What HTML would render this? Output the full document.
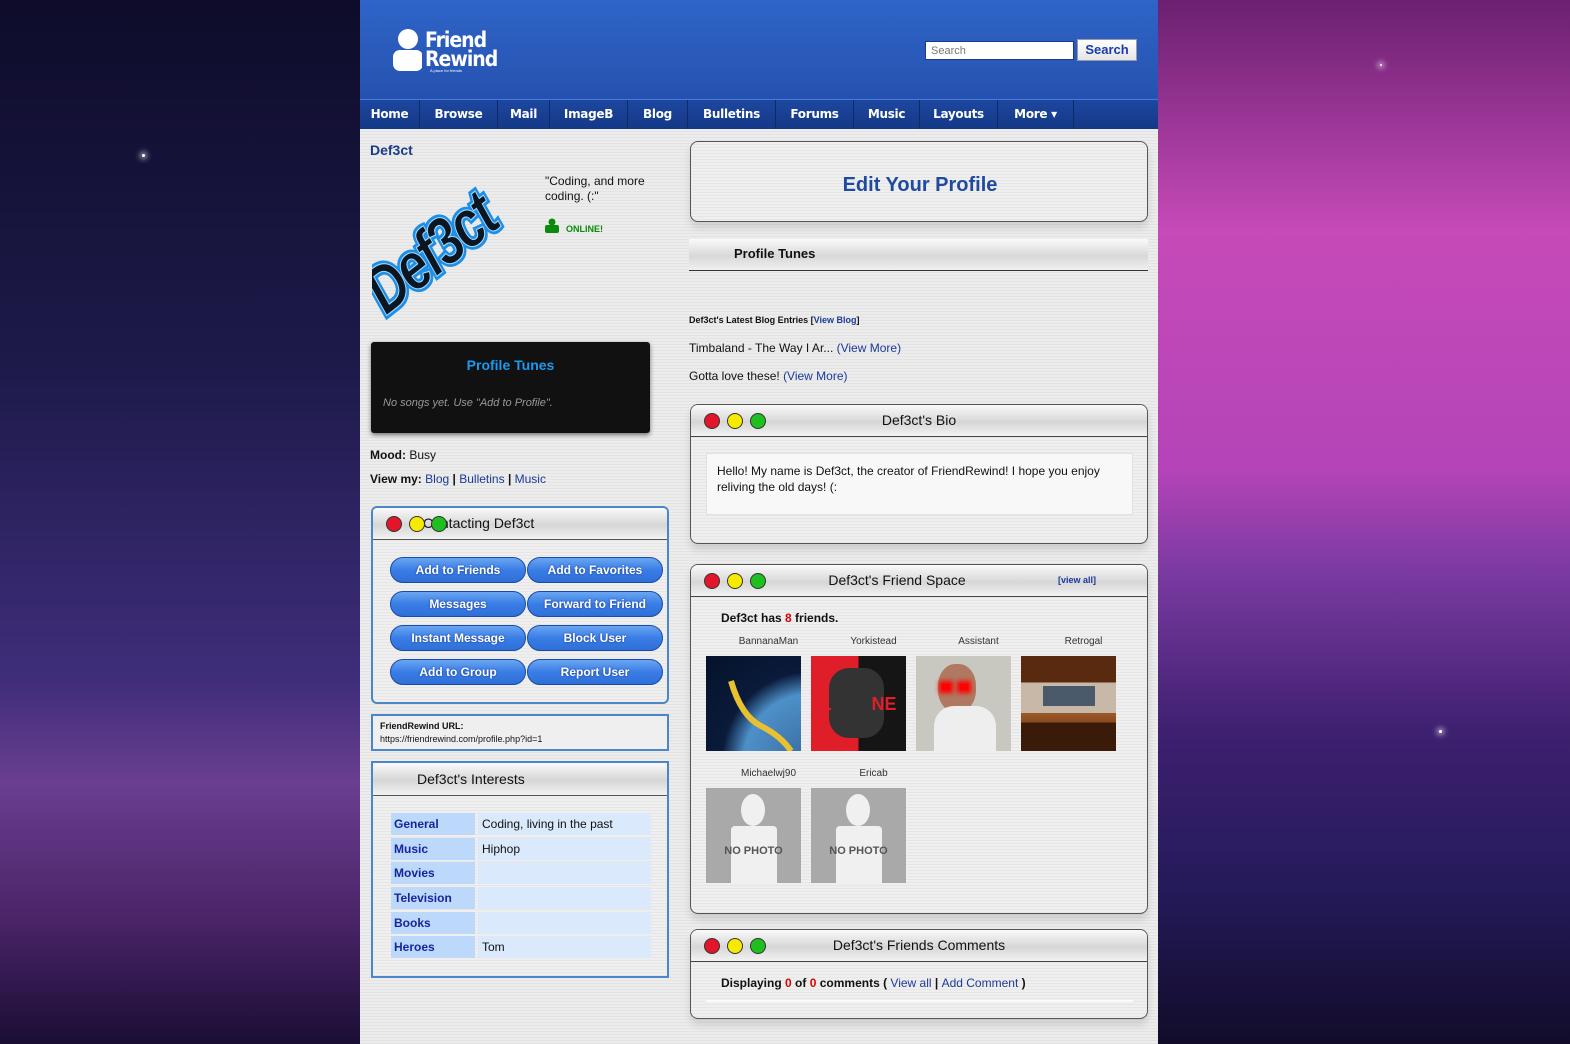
<!DOCTYPE html>
<html><head><meta charset="utf-8">
<style>
*{margin:0;padding:0;box-sizing:border-box}
body{width:1570px;height:1044px;overflow:hidden;font-family:"Liberation Sans",Arial,sans-serif;font-size:12px;color:#111;position:relative;background:#2a1a50}
.bgl{position:absolute;left:0;top:0;width:360px;height:1044px;background:linear-gradient(#0e0c2a 0%,#1d1a4a 35%,#3f2d7a 65%,#6a3e90 75%,#4a2468 88%,#1a0e34 100%)}
.bgr{position:absolute;left:1158px;top:0;width:412px;height:1044px;background:linear-gradient(#6a2070 0%,#c64ab8 22%,#b444b8 45%,#7a3aa0 55%,#3e2070 70%,#251a5a 85%,#120c2a 100%)}
.star{position:absolute;width:3px;height:3px;background:#fff;border-radius:50%;box-shadow:0 0 6px 2px rgba(255,255,255,.7)}
.page{position:absolute;left:360px;top:0;width:798px;height:1044px;background:repeating-linear-gradient(#ececec 0,#ececec 2px,#e3e3e3 2px,#e3e3e3 3px)}
.hdr{position:absolute;left:0;top:0;width:798px;height:99px;background:linear-gradient(#2f64c8,#2552b0)}
.nav{position:absolute;left:0;top:99px;width:798px;height:30px;background:linear-gradient(#1d47a0,#143886);border-top:1px solid #4a7ad8}
.nav span{position:absolute;top:0;height:29px;line-height:29px;color:#fff;font-weight:bold;font-size:12px;border-right:1px solid #0e2a6a;text-align:center;font-family:"DejaVu Sans","Liberation Sans",sans-serif;letter-spacing:-0.3px}
.a{position:absolute}
a,.lk{color:#1a3a9a;text-decoration:none}
.win{position:absolute;border:1px solid #555;border-radius:8px;overflow:hidden;box-shadow:0 6px 8px rgba(0,0,0,.12);background:repeating-linear-gradient(#efefef 0,#efefef 2px,#e6e6e6 2px,#e6e6e6 3px)}
.wh{position:absolute;left:0;top:0;right:0;height:32px;background:linear-gradient(#fafafa,#d6d6d6 55%,#f2f2f2);border-bottom:1px solid #444;font-size:14px;text-align:center;line-height:30px;color:#111}
.dot{position:absolute;top:8px;width:16px;height:16px;border-radius:50%;border:1px solid #333}
.r{background:#e3152a}.y{background:#f5ea00}.g{background:#1fbf1f}
.bwin{position:absolute;border:2px solid #4a86c8;border-radius:6px;background:repeating-linear-gradient(#efefef 0,#efefef 2px,#e6e6e6 2px,#e6e6e6 3px);overflow:hidden}
.btn{position:absolute;width:136px;height:26px;border-radius:13px;background:linear-gradient(#6aa6f2,#3a7de6 50%,#2f6fd8);border:1px solid #1a4aa8;color:#fff;font-weight:bold;font-size:12px;text-align:center;line-height:24px;text-shadow:0 0 2px #1a3a8a}
.tl{position:absolute;left:18px;width:84px;height:22px;background:#bcd8fa;color:#15269a;font-weight:bold;font-size:12px;line-height:22px;padding-left:3px}
.tv{position:absolute;left:105px;width:173px;height:22px;background:#dbe9fc;font-size:12px;line-height:22px;padding-left:4px}
.fn{position:absolute;font-size:10px;color:#333;text-align:center;width:95px}
.ph{position:absolute;width:95px;height:95px;overflow:hidden}
.np{background:#a9a9a9}
</style></head><body>
<div class="bgl"></div><div class="bgr"></div>
<div class="star" style="left:142px;top:154px"></div>
<div class="star" style="left:1439px;top:730px"></div>
<div class="star" style="left:1380px;top:64px;width:2px;height:2px"></div>

<div class="page">
 <div class="hdr">
  <svg class="a" style="left:32px;top:28px" width="30" height="44" viewBox="0 0 30 44"><circle cx="16" cy="11" r="10" fill="#fff"/><rect x="1" y="22" width="30" height="21" rx="7" fill="#fff"/></svg>
  <div class="a" style="left:65px;top:31px;color:#fff;font-weight:bold;font-size:21px;line-height:19px;font-family:'DejaVu Sans Condensed','Liberation Sans',sans-serif;letter-spacing:-1px">Friend<br>Rewind</div>
  <div class="a" style="left:70px;top:68px;color:#fff;font-size:4px">A place for friends</div>
  <div class="a" style="left:565px;top:41px;width:149px;height:19px;background:#fff;border:1px solid #1a3a8a;font-size:11px;color:#777;padding:3px 5px">Search</div>
  <div class="a" style="left:717px;top:39px;width:60px;height:22px;background:linear-gradient(#fff,#e4e4e4);border:1px solid #99a;color:#1a3aaa;font-weight:bold;font-size:13px;text-align:center;line-height:20px">Search</div>
 </div>
 <div class="nav">
  <span style="left:0;width:60px">Home</span><span style="left:60px;width:78px">Browse</span><span style="left:138px;width:52px">Mail</span><span style="left:190px;width:78px">ImageB</span><span style="left:268px;width:60px">Blog</span><span style="left:328px;width:88px">Bulletins</span><span style="left:416px;width:78px">Forums</span><span style="left:494px;width:66px">Music</span><span style="left:560px;width:78px">Layouts</span><span style="left:638px;width:76px">More ▾</span>
 </div>

 <!-- LEFT -->
 <div class="a" style="left:10px;top:142px;font-weight:bold;font-size:14px;color:#1a3a8a">Def3ct</div>
 <svg class="a" style="left:12px;top:178px" width="160" height="152" viewBox="0 0 160 152">
  <g transform="translate(14,138) rotate(-38)">
  <g transform="scale(0.92,1.15)">
  <text x="0" y="0" font-family="Liberation Sans" font-style="italic" font-weight="bold" font-size="58" fill="#0a1a2a" stroke="#1e8ee6" stroke-width="6" letter-spacing="-3">Def3ct</text>
  <text x="0" y="0" font-family="Liberation Sans" font-style="italic" font-weight="bold" font-size="58" fill="#0a1622" stroke="#9fd8ff" stroke-width="1" letter-spacing="-3">Def3ct</text></g></g>
 </svg>
 <div class="a" style="left:185px;top:174px;font-size:12px;line-height:15px;width:120px">"Coding, and more coding. (:"</div>
 <svg class="a" style="left:185px;top:218px" width="14" height="15"><circle cx="7" cy="4" r="3.5" fill="#0a8a0a"/><rect x="0" y="7" width="14" height="8" rx="2" fill="#0a8a0a"/></svg>
 <div class="a" style="left:206px;top:224px;font-size:9px;font-weight:bold;color:#0a8a0a">ONLINE!</div>
 <div class="a" style="left:11px;top:342px;width:279px;height:91px;background:#111;border-radius:3px;box-shadow:0 2px 5px rgba(0,0,0,.5)">
  <div class="a" style="left:0;width:279px;top:15px;text-align:center;color:#1a9af0;font-weight:bold;font-size:14px">Profile Tunes</div>
  <div class="a" style="left:12px;top:55px;color:#999;font-style:italic;font-size:11px">No songs yet. Use "Add to Profile".</div>
 </div>
 <div class="a" style="left:10px;top:448px;font-size:12px"><b>Mood:</b> Busy</div>
 <div class="a" style="left:10px;top:472px;font-size:12px"><b>View my:</b> <span class="lk">Blog</span> <b>|</b> <span class="lk">Bulletins</span> <b>|</b> <span class="lk">Music</span></div>

 <div class="bwin" style="left:11px;top:506px;width:298px;height:198px">
  <div class="wh" style="text-align:left;padding-left:50px;border-bottom-color:#555">Contacting Def3ct</div>
  <div class="dot r" style="left:13px;top:8px"></div><div class="dot y" style="left:36px;top:8px"></div><div class="dot g" style="left:58px;top:8px"></div>
  <div class="btn" style="left:17px;top:49px">Add to Friends</div><div class="btn" style="left:154px;top:49px">Add to Favorites</div>
  <div class="btn" style="left:17px;top:83px">Messages</div><div class="btn" style="left:154px;top:83px">Forward to Friend</div>
  <div class="btn" style="left:17px;top:117px">Instant Message</div><div class="btn" style="left:154px;top:117px">Block User</div>
  <div class="btn" style="left:17px;top:151px">Add to Group</div><div class="btn" style="left:154px;top:151px">Report User</div>
 </div>
 <div class="a" style="left:11px;top:714px;width:298px;height:37px;border:2px solid #4a86c8;background:#efefef;padding:4px 7px;font-size:9px;line-height:13px;color:#111"><b>FriendRewind URL:</b><br>https://friendrewind.com/profile.php?id=1</div>

 <div class="bwin" style="left:11px;top:761px;width:298px;height:217px;border-radius:0">
  <div class="wh" style="text-align:left;padding-left:44px;height:33px;line-height:32px;border-bottom-color:#555">Def3ct's Interests</div>
  <div class="tl" style="top:50px">General</div><div class="tv" style="top:50px">Coding, living in the past</div>
  <div class="tl" style="top:75px">Music</div><div class="tv" style="top:75px">Hiphop</div>
  <div class="tl" style="top:99px">Movies</div><div class="tv" style="top:99px"></div>
  <div class="tl" style="top:124px">Television</div><div class="tv" style="top:124px"></div>
  <div class="tl" style="top:149px">Books</div><div class="tv" style="top:149px"></div>
  <div class="tl" style="top:173px">Heroes</div><div class="tv" style="top:173px">Tom</div>
 </div>

 <!-- RIGHT -->
 <div class="win" style="left:330px;top:141px;width:458px;height:81px">
  <div class="a" style="left:0;width:458px;top:32px;text-align:center;font-size:20px;font-weight:bold;color:#1f4aa0">Edit Your Profile</div>
 </div>
 <div class="a" style="left:329px;top:239px;width:459px;height:32px;background:linear-gradient(#fafafa,#d8d8d8 55%,#f0f0f0);border-bottom:1px solid #333;font-size:13px;font-weight:bold;line-height:30px;padding-left:45px">Profile Tunes</div>
 <div class="a" style="left:329px;top:315px;font-size:9px;font-weight:bold">Def3ct's Latest Blog Entries [<span class="lk">View Blog</span>]</div>
 <div class="a" style="left:329px;top:341px;font-size:12px">Timbaland - The Way I Ar... <span class="lk">(View More)</span></div>
 <div class="a" style="left:329px;top:369px;font-size:12px">Gotta love these! <span class="lk">(View More)</span></div>

 <div class="win" style="left:330px;top:404px;width:458px;height:140px">
  <div class="wh">Def3ct's Bio</div>
  <div class="dot r" style="left:13px"></div><div class="dot y" style="left:36px"></div><div class="dot g" style="left:59px"></div>
  <div class="a" style="left:15px;top:48px;width:427px;height:62px;background:#f8f8f8;border:1px solid #e2e2e2;padding:9px 10px;font-size:12px;line-height:16px">Hello! My name is Def3ct, the creator of FriendRewind! I hope you enjoy reliving the old days! (:</div>
 </div>

 <div class="win" style="left:330px;top:564px;width:458px;height:350px">
  <div class="wh" style="padding-right:44px">Def3ct's Friend Space<span class="a lk" style="left:367px;top:0;font-size:9px;font-weight:bold">[view all]</span></div>
  <div class="dot r" style="left:13px"></div><div class="dot y" style="left:36px"></div><div class="dot g" style="left:59px"></div>
  <div class="a" style="left:30px;top:46px;font-weight:bold;font-size:12px">Def3ct has <span style="color:#d00">8</span> friends.</div>
  <div class="fn" style="left:30px;top:71px">BannanaMan</div><div class="fn" style="left:135px;top:71px">Yorkistead</div><div class="fn" style="left:240px;top:71px">Assistant</div><div class="fn" style="left:345px;top:71px">Retrogal</div>
  <div class="ph" style="left:15px;top:91px;background:radial-gradient(circle at 110% 110%,#3a6aa0 0,#4d90c8 45%,#0a1a3a 60%,#04122a 100%)"><svg width="95" height="95"><path d="M25 25 Q35 60 55 70 Q75 80 85 95" stroke="#e8c030" stroke-width="6" fill="none"/></svg></div>
  <div class="ph" style="left:120px;top:91px;background:linear-gradient(to right,#e01e2a 0,#e01e2a 50%,#151515 50%)"><div class="a" style="left:18px;top:12px;width:55px;height:70px;background:#333;border-radius:20px"></div><div class="a" style="left:0;top:38px;color:#e01e2a;font-weight:bold;font-size:18px;width:95px;text-align:center">L&nbsp;&nbsp;&nbsp;&nbsp;&nbsp;&nbsp;&nbsp;&nbsp;NE</div></div>
  <div class="ph" style="left:225px;top:91px;background:#c8c8c0"><div class="a" style="left:22px;top:8px;width:38px;height:48px;background:#b07860;border-radius:45%"></div><div class="a" style="left:18px;top:50px;width:62px;height:45px;background:#eee;border-radius:20px 20px 0 0"></div><div class="a" style="left:26px;top:28px;width:8px;height:6px;background:#f00;box-shadow:0 0 5px 3px #f00,18px 0 0 #f00,18px 0 5px 3px #f00"></div></div>
  <div class="ph" style="left:330px;top:91px;background:linear-gradient(#5a2a10 0,#5a2a10 28%,#c8b8a8 28%,#c8b8a8 60%,#9a5a28 60%,#8a4a20 70%,#3a1a08 70%)"><div class="a" style="left:22px;top:30px;width:52px;height:20px;background:#4a5a6a"></div></div>
  <div class="fn" style="left:30px;top:203px">Michaelwj90</div><div class="fn" style="left:135px;top:203px">Ericab</div>
  <div class="ph np" style="left:15px;top:223px"><div class="a" style="left:35px;top:6px;width:24px;height:32px;background:#f0f0f0;border-radius:50%"></div><div class="a" style="left:25px;top:38px;width:46px;height:57px;background:#f0f0f0;border-radius:4px 4px 0 0"></div><div class="a" style="left:0;top:57px;width:95px;text-align:center;font-weight:bold;font-size:11px;color:#555">NO PHOTO</div></div>
  <div class="ph np" style="left:120px;top:223px"><div class="a" style="left:35px;top:6px;width:24px;height:32px;background:#f0f0f0;border-radius:50%"></div><div class="a" style="left:25px;top:38px;width:46px;height:57px;background:#f0f0f0;border-radius:4px 4px 0 0"></div><div class="a" style="left:0;top:57px;width:95px;text-align:center;font-weight:bold;font-size:11px;color:#555">NO PHOTO</div></div>
 </div>

 <div class="win" style="left:330px;top:929px;width:458px;height:90px">
  <div class="wh">Def3ct's Friends Comments</div>
  <div class="dot r" style="left:13px"></div><div class="dot y" style="left:36px"></div><div class="dot g" style="left:59px"></div>
  <div class="a" style="left:30px;top:46px;font-weight:bold;font-size:12px">Displaying <span style="color:#d00">0</span> of <span style="color:#d00">0</span> comments ( <span class="lk" style="font-weight:normal">View all</span> | <span class="lk" style="font-weight:normal">Add Comment</span> )</div>
  <div class="a" style="left:15px;top:70px;width:427px;height:2px;background:#fafafa"></div>
 </div>
</div>
</body></html>
